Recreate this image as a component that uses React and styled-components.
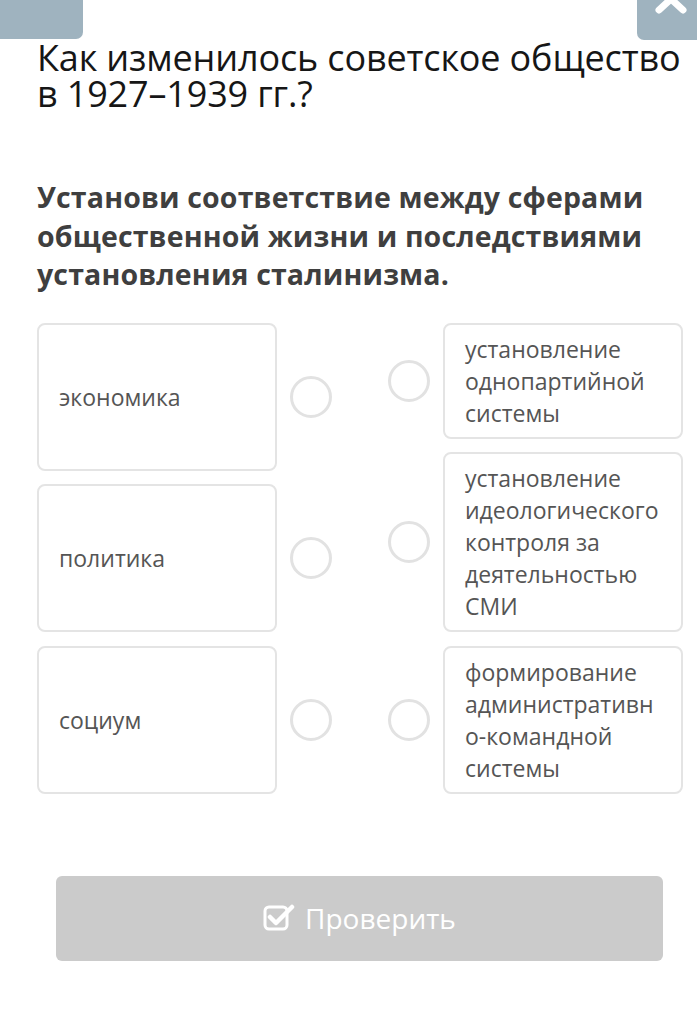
import React from 'react';
import styled, { createGlobalStyle } from 'styled-components';

const GlobalStyle = createGlobalStyle`
  body {
    margin: 0;
    background: #ffffff;
    font-family: "Open Sans", "Noto Sans", sans-serif;
  }
`;

const leftItems = ['экономика', 'политика', 'социум'];

const rightItems = [
  'установление однопартийной системы',
  'установление идеологического контроля за деятельностью СМИ',
  'формирование административно-командной системы',
];

const App = () => {
  return (
    <>
      <GlobalStyle />
      <StyledPage>
        <StyledTopBar>
          <StyledTab side="left" />
          <StyledTab side="right">
            <svg width="34" height="22" viewBox="0 0 34 22">
              <path d="M5 14 L17 3 L29 14" stroke="#fff" strokeWidth="7" fill="none" strokeLinecap="round" strokeLinejoin="round" />
            </svg>
          </StyledTab>
        </StyledTopBar>

        <StyledContent>
          <StyledTitle>Как изменилось советское общество в 1927–1939 гг.?</StyledTitle>
          <StyledTask>
            Установи соответствие между сферами общественной жизни и последствиями установления сталинизма.
          </StyledTask>

          <StyledBoard>
            <StyledColumn>
              {leftItems.map((item) => (
                <StyledRow key={item}>
                  <StyledCard stretch>{item}</StyledCard>
                  <StyledDot />
                </StyledRow>
              ))}
            </StyledColumn>
            <StyledColumn>
              {rightItems.map((item) => (
                <StyledRow key={item}>
                  <StyledDot />
                  <StyledCard>{item}</StyledCard>
                </StyledRow>
              ))}
            </StyledColumn>
          </StyledBoard>
        </StyledContent>

        <StyledButton>
          <svg width="32" height="28" viewBox="0 0 32 28">
            <rect x="2" y="4" width="22" height="22" rx="4" stroke="#fff" strokeWidth="3" fill="none" />
            <path d="M7 14 L13 20 L29 4" stroke="#fff" strokeWidth="4.5" fill="none" strokeLinecap="round" strokeLinejoin="round" />
          </svg>
          Проверить
        </StyledButton>
      </StyledPage>
    </>
  );
};

const StyledPage = styled.div`
  width: 697px;
  min-height: 1029px;
  background: #fff;
`;

const StyledTopBar = styled.div`
  display: flex;
  justify-content: space-between;
  height: 40px;
`;

const StyledTab = styled.div`
  width: ${(p) => (p.side === 'left' ? '83px' : '60px')};
  height: ${(p) => (p.side === 'left' ? '39px' : '40px')};
  background: #9fb3bf;
  border-radius: ${(p) => (p.side === 'left' ? '0 0 7px 0' : '0 0 0 7px')};
  display: flex;
  justify-content: center;
  overflow: hidden;

  svg {
    margin-top: -4px;
    margin-left: 8px;
  }
`;

const StyledContent = styled.div`
  padding: 0 14px 0 37px;
`;

const StyledTitle = styled.h1`
  margin: 0 -14px 0 0;
  max-width: 660px;
  font-size: 36px;
  line-height: 36px;
  font-weight: 400;
  letter-spacing: -0.15px;
  color: #161616;
`;

const StyledTask = styled.h2`
  margin: 66px 0 0;
  font-size: 28.5px;
  line-height: 38.5px;
  font-weight: 700;
  letter-spacing: 0.15px;
  color: #3f3f3f;
`;

const StyledBoard = styled.div`
  display: flex;
  justify-content: space-between;
  margin-top: 29px;
`;

const StyledColumn = styled.div`
  display: flex;
  flex-direction: column;
  gap: 13.5px;
`;

const StyledRow = styled.div`
  display: flex;
  align-items: center;
  gap: 13px;
  flex: 1;
`;

const StyledCard = styled.div`
  box-sizing: border-box;
  width: 240px;
  align-self: stretch;
  padding: 8px 18px 8px 20px;
  border: 2px solid #e4e4e4;
  border-radius: 8px;
  font-size: 23px;
  line-height: 32px;
  color: #555;
  overflow-wrap: anywhere;
  display: flex;
  align-items: ${(p) => (p.stretch ? 'center' : 'flex-start')};
`;

const StyledDot = styled.div`
  box-sizing: border-box;
  width: 42px;
  height: 42px;
  flex-shrink: 0;
  border: 3px solid #e2e2e2;
  border-radius: 50%;
`;

const StyledButton = styled.button`
  display: flex;
  align-items: center;
  justify-content: center;
  gap: 10px;
  width: 607px;
  height: 85px;
  margin: 82px 0 0 56px;
  border: none;
  border-radius: 6px;
  background: #cbcbcb;
  color: #fff;
  font-family: "Open Sans", "Noto Sans", sans-serif;
  font-size: 28px;

  svg {
    margin-top: -2px;
  }
`;

export default App;
